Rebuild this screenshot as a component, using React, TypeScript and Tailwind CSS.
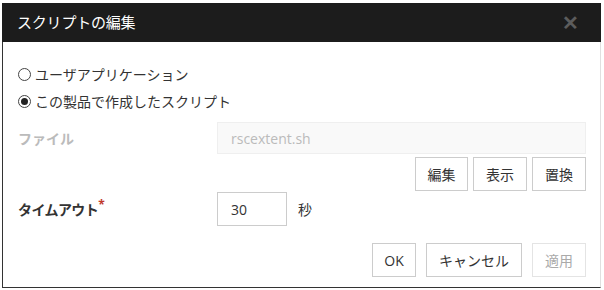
import React from "react";

const font = { fontFamily: '"Open Sans", "Noto Sans CJK JP", sans-serif' };

function Btn({ children, w, disabled }: { children: React.ReactNode; w: string; disabled?: boolean }) {
  return (
    <button
      className={`${w} h-[34px] bg-white border ${disabled ? "border-[#e4e4e4] text-[#aaa]" : "border-[#ccc] text-[#333]"} text-[14px] flex items-center justify-center`}
    >
      {children}
    </button>
  );
}

export default function App() {
  return (
    <div className="w-[604px] h-[290px] bg-white pt-[3px] pl-[2px]" style={font}>
      <div className="w-[599px] h-[285px] flex flex-col border-l border-b border-[#333] border-r border-r-[#e0e0e0]">
        <div className="h-[39px] bg-[#1c1c1c] flex items-center justify-between pl-[15px] pr-[22px] -ml-px -mr-px">
          <span className="text-white text-[15px] tracking-[-0.2px]">スクリプトの編集</span>
          <span className="text-[#5c5c5c] text-[20px] font-bold leading-none">✕</span>
        </div>
        <div className="flex flex-col pl-[15px] pr-[14px] pt-[19px] text-[14px] text-[#333]">
          <label className="h-[27px] flex items-center gap-[4px]">
            <span className="w-[13px] h-[13px] rounded-full border border-[#444] bg-white" />
            <span>ユーザアプリケーション</span>
          </label>
          <label className="h-[27px] flex items-center gap-[4px]">
            <span className="w-[13px] h-[13px] rounded-full border border-[#444] bg-white flex items-center justify-center">
              <span className="w-[7px] h-[7px] rounded-full bg-[#222]" />
            </span>
            <span>この製品で作成したスクリプト</span>
          </label>
          <div className="mt-[7px] flex items-center">
            <span className="w-[199px] font-bold text-[#bbb]">ファイル</span>
            <div className="flex-1 h-[32px] bg-[#f9f9f9] border border-[#efefef] flex items-center pl-[13px] text-[#bbb]">
              rscextent.sh
            </div>
          </div>
          <div className="mt-[3px] flex justify-end gap-[5px]">
            <Btn w="w-[53px]">編集</Btn>
            <Btn w="w-[54px]">表示</Btn>
            <Btn w="w-[54px]">置換</Btn>
          </div>
          <div className="mt-px flex items-center">
            <span className="w-[199px] font-bold tracking-[-0.6px]">
              タイムアウト<span className="text-[#c0392b] align-top text-[12px] leading-none">*</span>
            </span>
            <div className="w-[70px] h-[34px] border border-[#ccc] flex items-center pl-[13px]">30</div>
            <span className="ml-[11px]">秒</span>
          </div>
          <div className="mt-[17px] flex justify-end gap-[10px]">
            <Btn w="w-[44px]">OK</Btn>
            <Btn w="w-[96px]">キャンセル</Btn>
            <Btn w="w-[54px]" disabled>適用</Btn>
          </div>
        </div>
      </div>
    </div>
  );
}
